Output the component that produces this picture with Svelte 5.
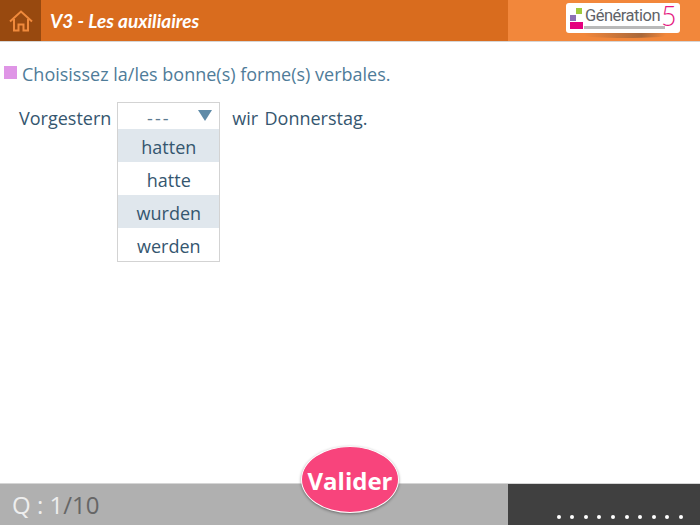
<script lang="ts">
    const options = ["hatten", "hatte", "wurden", "werden"];
    const dots = Array.from({ length: 10 });
</script>

<div class="page">
    <header class="topbar">
        <div class="home">
            <svg width="24" height="22" viewBox="0 0 24 22" fill="none" stroke="#f08a3c" stroke-width="2">
                <path d="M1 11.500 12 1.500l11 10" />
                <path d="M5 9V20.500h4.500v-6h5v6H19V9" />
            </svg>
        </div>
        <h1 class="title">V3 - Les auxiliaires</h1>
        <div class="brand">
            <div class="logo">
                <div class="squares">
                    <span class="sq green"></span>
                    <span class="sq purple"></span>
                    <span class="sq pink"></span>
                </div>
                <span class="logo-name">Génération</span>
                <span class="logo-five">5</span>
                <span class="logo-line"></span>
            </div>
        </div>
    </header>

    <main class="content">
        <p class="instruction"><span class="bullet"></span>Choisissez la/les bonne(s) forme(s) verbales.</p>
        <div class="sentence">
            <span class="word">Vorgestern</span>
            <div class="select">
                <div class="current">
                    <span class="placeholder">---</span>
                    <span class="arrow"></span>
                </div>
                {#each options as opt, i}
                    <div class="option" class:shaded={i % 2 === 0}>{opt}</div>
                {/each}
            </div>
            <span class="word after">wir&nbsp; Donnerstag.</span>
        </div>
    </main>

    <footer class="bottombar">
        <div class="counter"><span class="q">Q : 1</span><span class="total">/10</span></div>
        <button class="validate">Valider</button>
        <div class="progress">
            {#each dots as _}
                <span class="dot"></span>
            {/each}
        </div>
    </footer>
</div>

<style>
    :global(body) {
        margin: 0;
    }

    .page {
        width: 700px;
        height: 525px;
        display: flex;
        flex-direction: column;
        background: #fff;
        font-family: "Open Sans", sans-serif;
        color: #35566f;
        overflow: hidden;
    }

    .topbar {
        height: 41px;
        flex: none;
        display: flex;
        align-items: stretch;
        background: #d96c1e;
        border-bottom: 1px solid #d5d5d5;
    }

    .home {
        width: 41px;
        background: #98490f;
        display: flex;
        align-items: center;
        justify-content: center;
    }

    .title {
        flex: 1;
        margin: 0;
        padding-left: 9px;
        font-family: Lato, sans-serif;
        font-size: 19px;
        font-style: italic;
        font-weight: 700;
        line-height: 42px;
        color: #fff;
    }

    .brand {
        width: 192px;
        background: #f2873b;
        display: flex;
        justify-content: flex-end;
        align-items: flex-start;
        padding: 3px 20px 0 0;
        box-sizing: border-box;
    }

    .logo {
        position: relative;
        width: 114px;
        height: 30px;
        background: #fff;
        border-radius: 3px;
        display: flex;
        align-items: center;
        padding-left: 3px;
        box-sizing: border-box;
    }

    .squares {
        width: 14px;
        height: 21px;
        position: relative;
        flex: none;
        margin: 0 2px 0 0;
    }

    .sq {
        position: absolute;
    }

    .green {
        left: 7px;
        top: 0;
        width: 6px;
        height: 6px;
        background: #9fc93c;
    }

    .purple {
        left: 1px;
        top: 7px;
        width: 6px;
        height: 6px;
        background: #8c6fb5;
    }

    .pink {
        left: 1px;
        top: 14px;
        width: 13px;
        height: 7px;
        background: #e5007e;
    }

    .logo-name {
        font-family: Roboto, sans-serif;
        font-size: 16.500px;
        letter-spacing: -0.5px;
        color: #5f6368;
        margin-top: -5px;
    }

    .logo-five {
        font-family: Lato, sans-serif;
        font-size: 27px;
        font-weight: 300;
        line-height: 30px;
        color: #e5177f;
        margin: -5px 0 0 1px;
    }

    .logo-line {
        position: absolute;
        left: 18px;
        right: 15px;
        bottom: 4px;
        height: 3px;
        background: #b9b9b9;
    }

    .logo::after {
        content: "";
        position: absolute;
        left: 18px;
        right: 14px;
        top: 30px;
        height: 5px;
        border-radius: 0 0 50% 50%;
        background: linear-gradient(90deg, #f2873b, #a9683a 70%, #f2873b);
    }

    .content {
        flex: 1;
        min-height: 0;
    }

    .instruction {
        margin: 20px 0 0 4px;
        display: flex;
        align-items: center;
        font-size: 18px;
        line-height: 24px;
        color: #4f7c99;
    }

    .bullet {
        width: 13px;
        height: 13px;
        background: #df95e6;
        margin-right: 5px;
        margin-top: -3px;
    }

    .sentence {
        display: flex;
        align-items: flex-start;
        margin: 16px 0 0 19px;
        font-size: 18px;
    }

    .word {
        line-height: 32px;
    }

    .after {
        margin-left: 12px;
        word-spacing: -1.500px;
    }

    .select {
        width: 103px;
        margin-left: 6px;
        border: 1px solid #d3d3d3;
        box-sizing: border-box;
        text-align: center;
    }

    .current {
        position: relative;
        height: 26px;
        line-height: 30px;
        color: #5d7a90;
    }

    .placeholder {
        letter-spacing: 2px;
        margin-right: 20px;
    }

    .arrow {
        position: absolute;
        right: 7px;
        top: 7px;
        width: 0;
        height: 0;
        border-left: 7px solid transparent;
        border-right: 7px solid transparent;
        border-top: 11px solid #5f8ba8;
    }

    .option {
        height: 33px;
        line-height: 37px;
    }

    .shaded {
        background: #e0e7ed;
    }

    .bottombar {
        position: relative;
        height: 42px;
        flex: none;
        display: flex;
        justify-content: space-between;
        background: #b0b0b0;
        border-top: 1px solid #d5d5d5;
        box-sizing: border-box;
    }

    .counter {
        padding-left: 12px;
        font-size: 24px;
        line-height: 42px;
    }

    .q {
        color: #eee;
    }

    .total {
        color: #666;
    }

    .validate {
        position: absolute;
        left: 301px;
        top: -38px;
        width: 98px;
        height: 67px;
        padding: 2px 0 0;
        border: 1px solid #fff;
        border-radius: 50%;
        background: #f8447c;
        box-shadow: 0 1px 3px rgba(0, 0, 0, 0.4);
        color: #fff;
        font-family: "Open Sans", sans-serif;
        font-size: 24px;
        font-weight: 700;
    }

    .progress {
        width: 192px;
        background: #404040;
        display: flex;
        align-items: flex-end;
        justify-content: flex-end;
        gap: 9.600px;
        padding: 0 17px 6px 0;
        box-sizing: border-box;
    }

    .dot {
        width: 4px;
        height: 4px;
        border-radius: 50%;
        background: #fff;
    }
</style>
